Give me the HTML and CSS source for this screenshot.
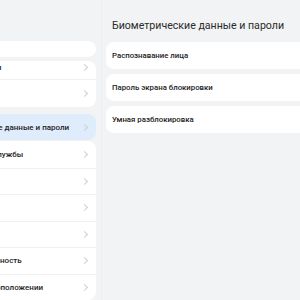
FILE: index.html
```html
<!DOCTYPE html>
<html lang="ru">
<head>
    <meta charset="UTF-8">
    <meta name="viewport" content="width=device-width, initial-scale=1.0">
    <title>Настройки</title>
    <link rel="stylesheet" href="styles.css">
</head>
<body>
    <div class="sidebar">
        <div class="search"></div>
        <div class="group">
            <div class="item first"><span>Все приложения</span><i class="chev"></i></div>
            <div class="item"><span></span><i class="chev"></i></div>
        </div>
        <div class="item active"><span>Биометрические данные и пароли</span><i class="chev"></i></div>
        <div class="group">
            <div class="item"><span>Специальные службы</span><i class="chev"></i></div>
            <div class="item"><span></span><i class="chev"></i></div>
            <div class="item"><span></span><i class="chev"></i></div>
            <div class="item"><span></span><i class="chev"></i></div>
            <div class="item"><span>Конфиденциальность</span><i class="chev"></i></div>
            <div class="item"><span>Данные о местоположении</span><i class="chev"></i></div>
        </div>
    </div>
    <div class="content">
        <h1>Биометрические данные и пароли</h1>
        <div class="card">Распознавание лица</div>
        <div class="card">Пароль экрана блокировки</div>
        <div class="card">Умная разблокировка</div>
    </div>
</body>
</html>
```

FILE: styles.css
```css
body {
    font-family: Roboto, "Noto Sans", sans-serif;
    margin: 0;
    height: 300px;
    overflow: hidden;
    display: flex;
    background-color: #f2f3f5;
    color: #222;
}
.sidebar {
    width: 157px;
    flex-shrink: 0;
    margin-left: -61px;
    padding-top: 41px;
    display: flex;
    flex-direction: column;
}
.search {
    height: 17px;
    border-radius: 9px;
    background-color: #fff;
    margin-bottom: 4px;
}
.group {
    background-color: #fff;
    border-radius: 8px;
}
.item {
    height: 26.5px;
    display: flex;
    align-items: center;
    justify-content: space-between;
    padding: 0 9px 0 0;
    font-size: 8px;
    font-weight: 500;
    border-top: 1px solid #f0f0f0;
    box-sizing: border-box;
}
.group .item:first-child {
    border-top: none;
}
.item.first {
    height: 18px;
    padding-bottom: 6px;
}
.item + .item {
    height: 28px;
}
.group:last-child .item + .item {
    height: 26.5px;
}
.item.active {
    height: 27px;
    margin: 7px 0 1px;
    padding-top: 1px;
    border-top: none;
    border-radius: 8px;
    background-color: #dfecfb;
}
.chev {
    width: 4px;
    height: 4px;
    border-top: 1px solid #cfcfcf;
    border-right: 1px solid #cfcfcf;
    transform: rotate(45deg);
}
.content {
    flex: 1;
    margin-left: 5px;
    padding-left: 4px;
    border-left: 1px solid #eceef0;
}
h1 {
    font-size: 10.6px;
    font-weight: 400;
    margin: 19px 0 10px 6px;
    color: #2a2a2a;
}
.card {
    height: 27px;
    display: flex;
    align-items: center;
    padding-left: 6px;
    margin-bottom: 5px;
    margin-right: -10px;
    background-color: #fff;
    border-radius: 8px;
    font-size: 7.8px;
    font-weight: 500;
}
```
